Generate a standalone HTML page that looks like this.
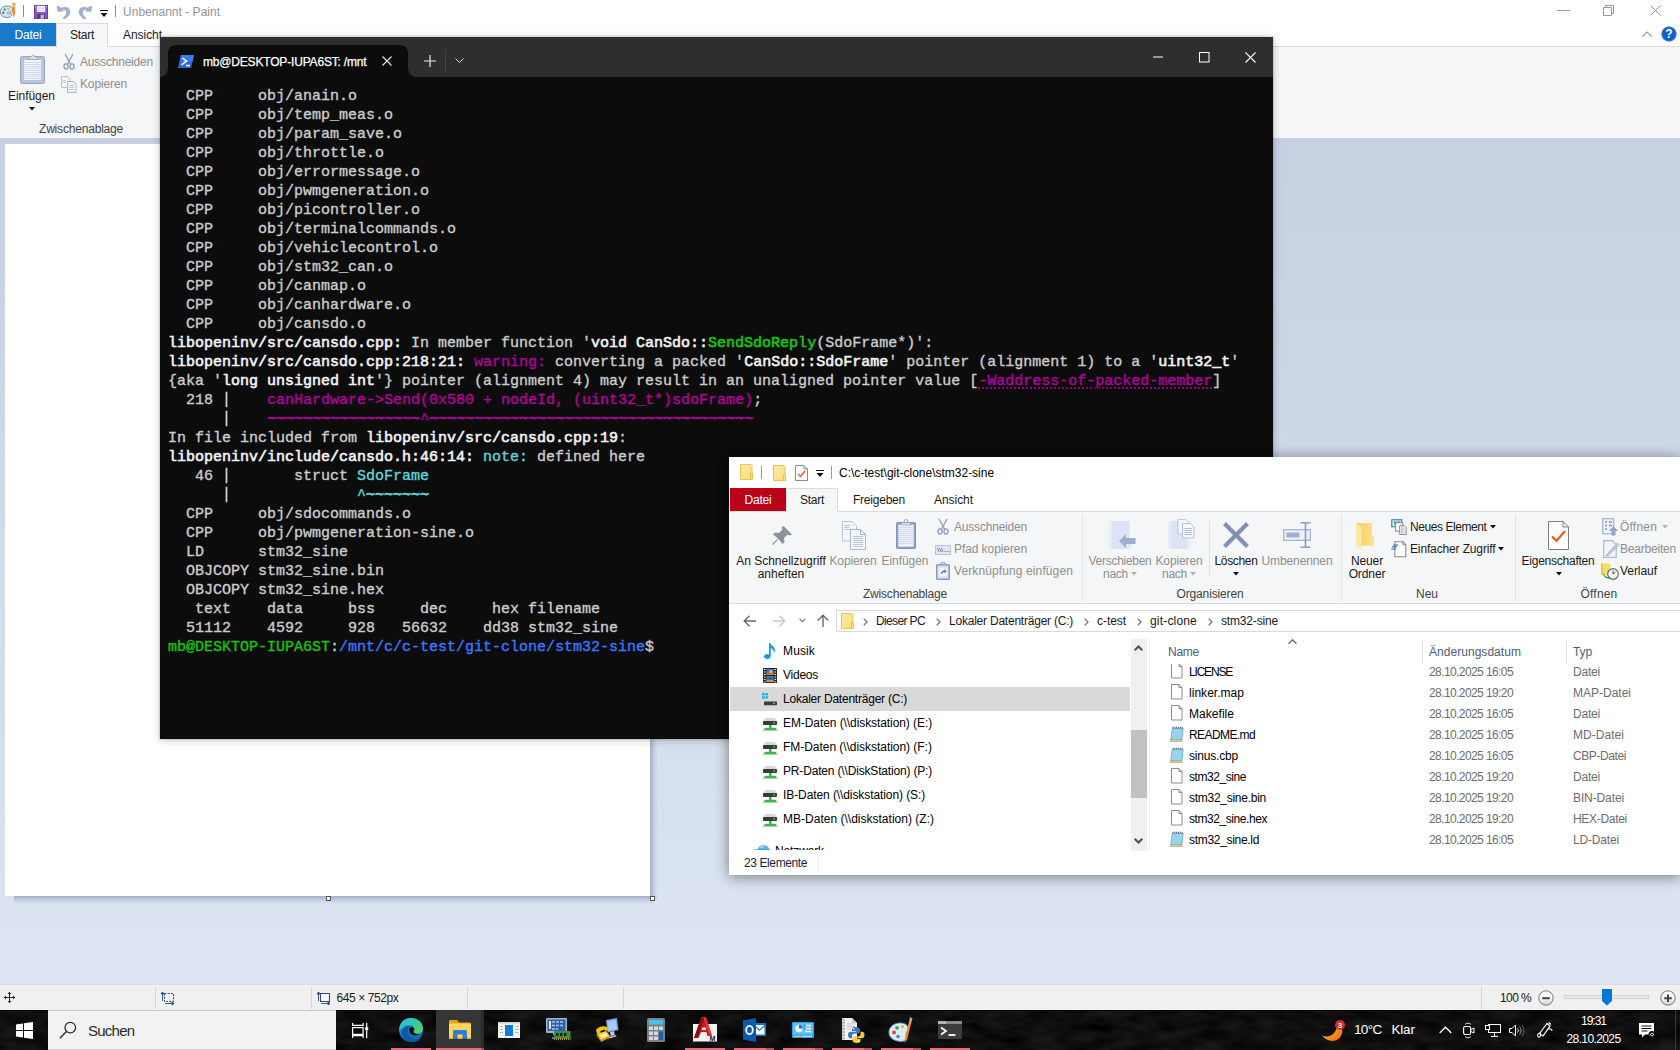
<!DOCTYPE html>
<html lang="de"><head>
<meta charset="utf-8">
<title>Desktop</title>
<style>
*{box-sizing:border-box;margin:0;padding:0}
html,body{width:1680px;height:1050px;overflow:hidden;background:#fff}
body{position:relative;font-family:"Liberation Sans",sans-serif;font-size:12px;color:#1a1a1a}
.abs{position:absolute}
.t{position:absolute;white-space:nowrap;line-height:14px}
svg{position:absolute;overflow:visible}

/* ---------- PAINT ---------- */
#paint{position:absolute;left:0;top:0;width:1680px;height:1010px;background:#fff}
#p-rib{position:absolute;left:0;top:47px;width:1680px;height:91px;background:#f5f6f7}
#p-tabline{position:absolute;left:0;top:46px;width:1680px;height:1px;background:#dadbdc}
#p-datei{position:absolute;left:0;top:23px;width:56px;height:23px;background:#1979ca;color:#fff;text-align:center;line-height:24px}
#p-start{position:absolute;left:56px;top:23px;width:52px;height:24px;background:#f5f6f7;border:1px solid #dadbdc;border-bottom:none;text-align:center;line-height:23px}
#p-work{position:absolute;left:0;top:138px;width:1680px;height:846px;background:linear-gradient(#c6d0e1,#dce5f1)}
#p-canvas{position:absolute;left:5px;top:6px;width:645px;height:752px;background:#fff;}
#p-status{position:absolute;left:0;top:984px;width:1680px;height:26px;background:#f0f0f0;border-top:1px solid #dcdcdc}
.hnd{position:absolute;width:5px;height:5px;background:#fff;border:1px solid #555}
.psep{position:absolute;top:2px;width:1px;height:22px;background:#d7d7d7}

/* ---------- TERMINAL ---------- */
#term{position:absolute;left:160px;top:37px;width:1113px;height:702px;background:#0c0c0c;box-shadow:0 1px 8px rgba(0,0,0,.26),0 0 1px rgba(0,0,0,.5)}
#t-bar{position:absolute;left:0;top:0;width:1113px;height:40px;background:#2e2e2e}
#t-tab{position:absolute;left:8px;top:8px;width:240px;height:32px;background:#0c0c0c;border-radius:8px 8px 0 0}
#t-tab:before,#t-tab:after{content:"";position:absolute;bottom:0;width:8px;height:8px}
#t-tab:before{left:-8px;background:radial-gradient(circle at 0 0,transparent 7.5px,#0c0c0c 8px)}
#t-tab:after{right:-8px;background:radial-gradient(circle at 100% 0,transparent 7.5px,#0c0c0c 8px)}
#t-pre{position:absolute;left:8px;top:50px;font-family:"Liberation Mono",monospace;font-size:15px;line-height:19px;color:#cccccc;white-space:pre}
#t-pre{-webkit-text-stroke:.35px currentColor}
#t-pre b{color:#f2f2f2;font-weight:normal;-webkit-text-stroke:.6px currentColor}
#t-pre i{font-style:normal;display:inline-block;transform:scaleY(1.13);transform-origin:50% 60%}
#t-pre u{text-decoration:none;-webkit-text-stroke:.8px currentColor}
.mg{color:#b4009e}.gr{color:#16c60c}.cy{color:#3a96dd}.cn{color:#61d6d6}.bl{color:#3b78ff}

/* ---------- EXPLORER ---------- */
#exp{position:absolute;left:729px;top:457px;width:951px;height:418px;background:#fff;box-shadow:0 0 12px rgba(0,0,0,.3),0 4px 14px rgba(0,0,0,.2)}
#e-rib{position:absolute;left:0;top:54px;width:951px;height:93px;background:#f5f6f7;border-top:1px solid #dadbdc;border-bottom:1px solid #dadbdc}
#e-datei{position:absolute;left:1px;top:31px;width:56px;height:23px;background:#bd001a;color:#fff;text-align:center;line-height:24px}
#e-start{position:absolute;left:57px;top:31px;width:52px;height:24px;background:#f5f6f7;border:1px solid #dadbdc;border-bottom:none;text-align:center;line-height:23px}
.dis{color:#8f8f8f}
.gsep{position:absolute;top:2px;width:1px;height:87px;background:#e2e3e4}
.glab{position:absolute;top:75px;color:#444;white-space:nowrap;line-height:14px;transform:translateX(-50%)}
.c{transform:translateX(-50%);text-align:center}
#e-addr{position:absolute;left:107px;top:153px;width:860px;height:22px;border:1px solid #d9d9d9;background:#fff}
#e-nav{position:absolute;left:1px;top:182px;width:400px;height:211px;overflow:hidden}
.ni{position:absolute;left:0;width:400px;height:24px;line-height:24px;padding-left:53px;white-space:nowrap;color:#000}
.ni.sel{background:#d9d9d9}
#e-sb{position:absolute;left:402px;top:182px;width:16px;height:212px;background:#f0f0f0}
#e-sb .th{position:absolute;left:0;top:91px;width:16px;height:68px;background:#c1c1c1}
#e-list{position:absolute;left:420px;top:182px;width:531px;height:214px;overflow:hidden}
.hd{position:absolute;top:6px;color:#4c607a;line-height:14px;white-space:nowrap}
.hsep{position:absolute;top:1px;width:1px;height:23px;background:#e5e5e5}
.row{position:absolute;left:0;width:531px;height:21px;line-height:21px;white-space:nowrap}
.row .n{position:absolute;left:40px;color:#000}
.row .d{position:absolute;left:280px;color:#6d6d6d}
.row .ty{position:absolute;left:424px;color:#6d6d6d}
#e-stat{position:absolute;left:0;top:396px;width:951px;height:22px;background:#fff}

/* ---------- TASKBAR ---------- */
#tb{position:absolute;left:0;top:1010px;width:1680px;height:40px;background:#0b0b0b}
#tb-search{position:absolute;left:48px;top:0;width:288px;height:40px;background:#f2f2f2;border-top:1px solid #c4c4c4;border-bottom:1px solid #cfcfcf}
.run{position:absolute;top:38px;height:2px;background:#ea6b7e}
.run i{position:absolute;right:0;top:0;width:8px;height:2px;background:#b9505f}
</style>
</head>
<body>

<svg width="0" height="0" style="position:absolute"><defs>
<linearGradient id="fg1" x1="0" y1="0" x2="1" y2="1"><stop offset="0" stop-color="#ffeaa6"></stop><stop offset="1" stop-color="#fddb78"></stop></linearGradient>
<g id="file"><path d="M2.500 .500h7.500l3 3v11.500H2.500z" fill="#fff" stroke="#8c8c8c"></path><path d="M10 .500v3h3" fill="none" stroke="#8c8c8c"></path></g>
<g id="note"><path d="M3.200 2.500h11L12.800 14H1.800z" fill="#a5dcf2" stroke="#5e9dbb" stroke-width=".8"></path><path d="M4.200 4h9M4 6h9M3.800 8h9M3.500 10h9M3.300 12h9" stroke="#7cc3e2" stroke-width=".7"></path><path d="M1.600 14h11.200l.4 1.500H1.300z" fill="#ead9a4" stroke="#b39b5e" stroke-width=".6"></path><path d="M3.500 1.500h10.500" stroke="#5a5a5a" stroke-dasharray="1 .8" stroke-width="1.600"></path></g>
<g id="mus"><path d="M6.200 0c.8 2.500 5 3.500 4.800 7.500-.1 1.200-.6 2-1.200 2.500.5-2.500-1-4-3-4.800V13c0 1.800-1.500 3-3.400 3C1.500 16 0 14.900 0 13.500S1.600 11 3.400 11c.6 0 1.100 .1 1.600 .4V0z" fill="#1b9bf0"></path></g>
<g id="vid"><rect x="0" y="0" width="14" height="15" fill="#2b2b2b"></rect><path d="M1 1.500h1.500M1 4h1.500M1 6.500h1.500M1 9h1.500M1 11.500h1.500M1 14h1.500M11.500 1.500H13M11.500 4H13M11.500 6.500H13M11.500 9H13M11.500 11.500H13M11.500 14H13" stroke="#f2f2f2" stroke-width="1.200"></path><rect x="3.500" y="1" width="7" height="6" fill="#3b74d9"></rect><rect x="3.500" y="8" width="7" height="6" fill="#3b74d9"></rect><rect x="3.500" y="4.500" width="7" height="2.500" fill="#c7773a"></rect><rect x="3.500" y="12" width="7" height="2" fill="#c7a03a"></rect><circle cx="8" cy="3.500" r="1.600" fill="#e6c23a"></circle><circle cx="7.500" cy="10.500" r="1.300" fill="#5a4a2a"></circle></g>
<g id="hdd"><path d="M0 0h2.700v2.500H0zM3.400 0h2.700v2.500H3.400zM0 3.200h2.700v2.500H0zM3.400 3.200h2.700v2.500H3.400z" fill="#1fb0f2"></path><path d="M4 5.500h9l2 3H2z" fill="#d4d6d8"></path><rect x="2" y="8.500" width="13" height="3.800" rx=".8" fill="#3a3a3a"></rect><rect x="11" y="9.700" width="1.800" height="1.300" fill="#59e04a"></rect></g>
<g id="net"><path d="M2.500 0h9L14 3H0z" fill="#d9dadc"></path><rect x="0" y="3" width="14" height="4" rx=".8" fill="#3a3a3a"></rect><rect x="10" y="4.200" width="1.800" height="1.300" fill="#59e04a"></rect><path d="M6 7h2.500v3H6z" fill="#3db54a"></path><rect x="1.500" y="9.800" width="11.500" height="2.700" fill="#3db54a"></rect><path d="M0 10.500h1.500v2.500H0zM13 10.500h1.500v2.500H13z" fill="#c8c8c8"></path></g>

<g id="fold"><path d="M.500 .500h10.500l1 1V15.500H.500z" fill="url(#fg1)" stroke="#e9c452" stroke-width="1"></path><path d="M10.500 9.500h2V15.500h-2z" fill="#ffe48a" stroke="#e4b93c" stroke-width=".8"></path></g>
<g id="tri"><path d="M0 0h6L3 3.500z"></path></g>
<g id="netw"><path d="M3.500 8A6 6 0 0 1 15.500 8z" fill="#5fb0e6"></path><path d="M6 5c1-1.500 3-2.500 5-2-1 .5-1.500 1.500-3 1.800S7 5.500 6 5z" fill="#bfe2f8"></path><rect x="0" y="6.500" width="16" height="1.500" fill="#2f8ed6"></rect></g>
</defs></svg>
<!-- ================= PAINT ================= -->
<div id="paint">
  <div class="t" style="left: 123px; top: 5px; color: rgb(149, 149, 149); letter-spacing: 0.02px;">Unbenannt - Paint</div>

  <!-- paint app icon -->
  <svg style="left:0;top:2px" width="17" height="17" viewBox="0 0 17 17">
    <path d="M.300 9.500C.300 6 3.500 4 7.500 4c3 0 5 1.300 5 3.300 0 1.500-1.800 2-1.800 3.300 0 1 1.200 1.600 .6 3-.8 1.800-3.500 2.400-6 1.800C2 14.700 .300 12.500 .300 9.500z" fill="#d6e7f5" stroke="#4f8fc6" stroke-width="1"></path>
    <circle cx="3.200" cy="10.800" r="1.200" fill="#e24a3b"></circle><circle cx="4.600" cy="7.500" r="1.200" fill="#3fae49"></circle><circle cx="8.300" cy="7" r="1.300" fill="#f5b82e"></circle><circle cx="8.500" cy="11" r="1.100" fill="#fff" stroke="#4f8fc6" stroke-width=".8"></circle>
    <path d="M11.500 1c1-.8 3.500-.8 4.500 0l-1.200 3.500h-2z" fill="#e3b27a"></path><path d="M12.600 4.500h2.200l.5 6-1.500 5.500-1.500-5.500z" fill="#f58a1f"></path>
  </svg>
  <div class="abs" style="left:23px;top:5px;width:1px;height:12px;background:#8a8a8a"></div>
  <!-- save -->
  <svg style="left:34px;top:5px" width="14" height="14" viewBox="0 0 14 14">
    <rect x="0" y="0" width="14" height="14" rx=".8" fill="#8558c4"></rect><rect x=".500" y=".500" width="13" height="13" fill="none" stroke="#6a3fa8" stroke-width="1"></rect><rect x="2.800" y=".800" width="8.400" height="6.200" fill="#f4f1fa"></rect><path d="M3.500 3h7M3.500 5h7" stroke="#cfc6e4" stroke-width=".8"></path><rect x="3" y="9" width="8" height="5" fill="#5a3a8e"></rect><rect x="6.500" y="9.800" width="3.500" height="4" fill="#b9b9c0"></rect><rect x="1" y="1.200" width="1" height="1.200" fill="#d9c8f2"></rect><rect x="12" y="1.200" width="1" height="1.200" fill="#d9c8f2"></rect>
  </svg>
  <!-- undo / redo -->
  <svg style="left:57px;top:5px" width="14" height="14" viewBox="0 0 14 14"><path d="M0 1l1 5.500 5.500-.5-2-1.500c2.500-.8 5 .5 5 3 0 2-1.200 3.500-3.500 5.500l1.500 1C11.500 11.500 13 9.500 13 7c0-4-4-6-8.500-4z" fill="#a3b1cb" stroke="#8b9bb9" stroke-width=".5"></path></svg>
  <svg style="left:78px;top:5px" width="14" height="14" viewBox="0 0 14 14"><path transform="translate(14,0) scale(-1,1)" d="M0 1l1 5.500 5.500-.5-2-1.500c2.500-.8 5 .5 5 3 0 2-1.200 3.500-3.500 5.500l1.500 1C11.500 11.500 13 9.500 13 7c0-4-4-6-8.500-4z" fill="#a3b1cb" stroke="#8b9bb9" stroke-width=".5"></path></svg>
  <svg style="left:100px;top:10px" width="8" height="8" viewBox="0 0 8 8"><path d="M0 .5h8" stroke="#111" stroke-width="1"></path><path d="M.5 3h7L4 7z" fill="#111"></path></svg>
  <div class="abs" style="left:115px;top:5px;width:1px;height:12px;background:#8a8a8a"></div>
  <!-- window controls -->
  <svg style="left:1557px;top:10px" width="14" height="2"><path d="M0 .5h13" stroke="#999" stroke-width="1"></path></svg>
  <svg style="left:1603px;top:5px" width="11" height="11" viewBox="0 0 11 11"><path d="M.5 2.500h8v8h-8z" fill="none" stroke="#999"></path><path d="M2.500 2.500v-2h8v8h-2" fill="none" stroke="#999"></path></svg>
  <svg style="left:1650px;top:5px" width="11" height="11" viewBox="0 0 11 11"><path d="M.5 .5l10 10M10.500 .5l-10 10" stroke="#999" stroke-width="1"></path></svg>
  <svg style="left:1642px;top:31px" width="10" height="6" viewBox="0 0 10 6"><path d="M.5 5.500l4.500-4.500 4.500 4.500" fill="none" stroke="#999" stroke-width="1.100"></path></svg>
  <svg style="left:1661px;top:26px" width="16" height="16" viewBox="0 0 16 16"><circle cx="8" cy="8" r="7.600" fill="#0f5fc7"></circle><circle cx="8" cy="8" r="7" fill="none" stroke="#4a90e2" stroke-width=".6"></circle><text x="8" y="12.300" text-anchor="middle" font-family="Liberation Sans" font-weight="bold" font-size="12" fill="#fff">?</text></svg>
  <div id="p-tabline"></div>
  <div id="p-datei" style="letter-spacing: -0.2px;">Datei</div>
  <div id="p-start" style="letter-spacing: -0.27px;">Start</div>
  <div class="t" style="left: 123px; top: 28px; letter-spacing: -0.05px;">Ansicht</div>
  <div id="p-rib">

    <!-- clipboard big -->
    <svg style="left:20px;top:6px" width="25" height="31" viewBox="0 0 25 31">
      <rect x=".5" y="3.500" width="24" height="27" rx="2" fill="#b9c4dc" stroke="#95a3c4"></rect>
      <rect x="3.500" y="6.500" width="18" height="21" fill="#f4f7fc" stroke="#a9b6d3" stroke-width=".6"></rect>
      <path d="M4 9.500h17M4 11.500h17M4 13.500h17M4 15.500h17M4 17.500h17M4 19.500h17M4 21.500h17M4 23.500h17M4 25.500h17" stroke="#cdd8ee" stroke-width="1"></path>
      <path d="M8 6.500l1.500-3h2c0-2 3-2 3 0h2l1.500 3z" fill="#d9deea" stroke="#8d9bbc" stroke-width=".7"></path>
    </svg>
    <svg style="left:29px;top:60px" width="6" height="4"><path d="M0 0h6L3 3.500z" fill="#111"></path></svg>
    <!-- scissors -->
    <svg style="left:63px;top:7px" width="12" height="16" viewBox="0 0 12 16">
      <path d="M2 0l5.500 10M10 0L4.500 10" stroke="#97a4c0" stroke-width="1.500" fill="none"></path>
      <ellipse cx="3" cy="12.500" rx="2" ry="2.600" fill="none" stroke="#8f9dbd" stroke-width="1.400"></ellipse><ellipse cx="9" cy="12.500" rx="2" ry="2.600" fill="none" stroke="#8f9dbd" stroke-width="1.400"></ellipse>
    </svg>
    <!-- copy small -->
    <svg style="left:61px;top:29px" width="16" height="17" viewBox="0 0 16 17">
      <path d="M.5 .500h6l2.500 2.500v8.500h-8.500z" fill="#f5f7fb" stroke="#b7c2d9"></path>
      <path d="M6.500 5.500h6l2.500 2.500v8.500h-8.500z" fill="#f5f7fb" stroke="#a7b4d0"></path>
      <path d="M8 9.500h5M8 11.500h5M8 13.500h5M2 4.500h3M2 6.500h3" stroke="#b4c0da" stroke-width=".9"></path>
    </svg>
    <div class="t" style="left: 8px; top: 42px; color: rgb(26, 26, 26); letter-spacing: -0.05px;">Einfügen</div>
    <div class="t" style="left: 80px; top: 8px; color: rgb(143, 143, 143); letter-spacing: -0.2px;">Ausschneiden</div>
    <div class="t" style="left: 80px; top: 30px; color: rgb(143, 143, 143); letter-spacing: -0.13px;">Kopieren</div>
    <div class="t" style="left: 39px; top: 75px; color: rgb(68, 68, 68); letter-spacing: -0.19px;">Zwischenablage</div>
  </div>
  <div id="p-work"><div class="abs" style="left:14px;top:758px;width:636px;height:8px;background:linear-gradient(rgba(160,173,198,.95),rgba(190,201,221,.6) 60%,rgba(210,220,236,0))"></div><div class="abs" style="left:650px;top:15px;width:8px;height:743px;background:linear-gradient(90deg,rgba(160,173,198,.95),rgba(190,201,221,.6) 60%,rgba(210,220,236,0))"></div><div class="abs" style="left:650px;top:758px;width:8px;height:8px;background:linear-gradient(135deg,rgba(160,173,198,.95),rgba(190,201,221,.5) 45%,rgba(210,220,236,0) 75%)"></div><div id="p-canvas"></div><div class="hnd" style="left:650px;top:758px"></div><div class="hnd" style="left:326px;top:758px"></div><div class="hnd" style="left:650px;top:381px"></div></div>
  <div id="p-status">
    <div class="psep" style="left:155px"></div>
    <div class="psep" style="left:311px"></div>
    <div class="psep" style="left:467px"></div>
    <div class="psep" style="left:623px"></div>
    <div class="psep" style="left:1481px"></div>

    <svg style="left:4px;top:7px" width="11" height="11" viewBox="0 0 11 11"><path d="M5.500 0v11M0 5.500h11" stroke="#222" stroke-width="1"></path><path d="M5.500 0l-2 2h4zM5.500 11l-2-2h4zM0 5.500l2-2v4zM11 5.500l-2-2v4z" fill="#222"></path></svg>
    <svg style="left:161px;top:7px" width="14" height="13" viewBox="0 0 14 13"><rect x="3.500" y="1.500" width="9" height="8" fill="none" stroke="#2a4a7a" stroke-dasharray="2 1.200"></rect><path d="M1.500 0v9M1.500 0l-1.500 2h3zM4 11.500h9M13 11.500l-2-1.500v3z" stroke="#2a4a7a" stroke-width=".9" fill="#2a4a7a"></path></svg>
    <svg style="left:317px;top:7px" width="14" height="13" viewBox="0 0 14 13"><rect x="3.500" y="1.500" width="9" height="8" fill="#fff" stroke="#2a4a7a"></rect><path d="M1.500 0v9M1.500 0l-1.500 2h3zM4 11.500h9M13 11.500l-2-1.500v3z" stroke="#2a4a7a" stroke-width=".9" fill="#2a4a7a"></path></svg>
    <svg style="left:1538px;top:5px" width="16" height="16" viewBox="0 0 16 16"><defs><linearGradient id="zb" x1="0" y1="0" x2="0" y2="1"><stop offset="0" stop-color="#fff"></stop><stop offset=".55" stop-color="#f3f3f3"></stop><stop offset="1" stop-color="#cfcfcf"></stop></linearGradient></defs><circle cx="8" cy="8" r="7.200" fill="url(#zb)" stroke="#777" stroke-width="1"></circle><path d="M4.200 8.200h7.600" stroke="#444" stroke-width="2"></path></svg>
    <div class="abs" style="left:1564px;top:10px;width:85px;height:4px;background:#e7eaea;border:1px solid #d2d2d2"></div>
    <svg style="left:1602px;top:4px" width="10" height="17" viewBox="0 0 10 17"><path d="M0 0h10v12l-5 4.500L0 12z" fill="#0078d7"></path></svg>
    <svg style="left:1660px;top:5px" width="16" height="16" viewBox="0 0 16 16"><circle cx="8" cy="8" r="7.200" fill="url(#zb)" stroke="#777" stroke-width="1"></circle><path d="M4.200 8.200h7.600M8 4.400v7.600" stroke="#444" stroke-width="2"></path></svg>
    <div class="t" style="left: 336.5px; top: 6px; letter-spacing: -0.42px;">645 × 752px</div>
    <div class="t" style="left: 1500px; top: 6px; letter-spacing: -0.61px;">100 %</div>
  </div>
</div>

<!-- ================= TERMINAL ================= -->
<div id="term">
  <div id="t-bar">

    <svg style="left:264px;top:18px" width="12" height="12" viewBox="0 0 12 12"><path d="M6 0v12M0 6h12" stroke="#e8e8e8" stroke-width="1.200"></path></svg>
    <div class="abs" style="left:285px;top:12px;width:1px;height:23px;background:#444"></div>
    <svg style="left:295px;top:21px" width="9" height="5" viewBox="0 0 9 5"><path d="M.500 .500l4 4 4-4" fill="none" stroke="#ddd" stroke-width="1"></path></svg>
    <svg style="left:993px;top:19px" width="11" height="2"><path d="M0 1h10" stroke="#fff" stroke-width="1"></path></svg>
    <svg style="left:1039px;top:15px" width="11" height="11" viewBox="0 0 11 11"><rect x=".5" y=".5" width="9.500" height="9.500" fill="none" stroke="#fff" stroke-width="1"></rect></svg>
    <svg style="left:1085px;top:15px" width="11" height="11" viewBox="0 0 11 11"><path d="M.500 .500l10 10M10.500 .500l-10 10" stroke="#fff" stroke-width="1.100"></path></svg>
    <div id="t-tab">

      <svg style="left:10px;top:10px" width="16" height="13" viewBox="0 0 16 13"><path d="M3 0h13l-3 13H0z" fill="#2f6bd6"></path><path d="M3 0h13l-1.500 6.500H1.500z" fill="#3f7ce6"></path><path d="M4.500 3l4 3.200-5 3.600" fill="none" stroke="#fff" stroke-width="1.500"></path><path d="M8 10.500h4" stroke="#fff" stroke-width="1.500"></path></svg>
      <svg style="left:214px;top:11px" width="10" height="10" viewBox="0 0 10 10"><path d="M.500 .500l9 9M9.500 .500l-9 9" stroke="#e8e8e8" stroke-width="1.100"></path></svg>
      <div class="t" style="left: 35px; top: 10px; color: rgb(255, 255, 255); font-size: 12px; -webkit-text-stroke: 0.25px rgb(255, 255, 255); letter-spacing: -0.18px;">mb@DESKTOP-IUPA6ST: /mnt</div>
    </div>
  </div>
<pre id="t-pre">  CPP     obj/anain.o
  CPP     obj/temp_meas.o
  CPP     obj/param_save.o
  CPP     obj/throttle.o
  CPP     obj/errormessage.o
  CPP     obj/pwmgeneration.o
  CPP     obj/picontroller.o
  CPP     obj/terminalcommands.o
  CPP     obj/vehiclecontrol.o
  CPP     obj/stm32_can.o
  CPP     obj/canmap.o
  CPP     obj/canhardware.o
  CPP     obj/cansdo.o
<b>libopeninv/src/cansdo.cpp:</b> In member function '<b>void CanSdo::<span class="gr">SendSdoReply</span></b>(SdoFrame*)':
<b>libopeninv/src/cansdo.cpp:218:21:</b> <span class="mg">warning:</span> converting a packed '<b>CanSdo::SdoFrame</b>' pointer (alignment 1) to a '<b>uint32_t</b>'
{aka '<b>long unsigned int</b>'} pointer (alignment 4) may result in an unaligned pointer value [<span class="mg" style="text-decoration:underline dotted;text-underline-offset:3px">-Waddress-of-packed-member</span>]
  218 <i>|</i>    <span class="mg">canHardware-&gt;Send(0x580 + nodeId, (uint32_t*)sdoFrame)</span>;
      <i>|</i>    <span class="mg"><u>~~~~~~~~~~~~~~~~~</u>^<u>~~~~~~~~~~~~~~~~~~~~~~~~~~~~~~~~~~~~</u></span>
In file included from <b>libopeninv/src/cansdo.cpp:19</b>:
<b>libopeninv/include/cansdo.h:46:14:</b> <span class="cn">note:</span> defined here
   46 <i>|</i>       struct <span class="cn">SdoFrame</span>
      <i>|</i>              <span class="cn">^<u>~~~~~~~</u></span>
  CPP     obj/sdocommands.o
  CPP     obj/pwmgeneration-sine.o
  LD      stm32_sine
  OBJCOPY stm32_sine.bin
  OBJCOPY stm32_sine.hex
   text    data     bss     dec     hex filename
  51112    4592     928   56632    dd38 stm32_sine
<span class="gr">mb@DESKTOP-IUPA6ST</span>:<span class="bl">/mnt/c/c-test/git-clone/stm32-sine</span>$</pre>
</div>

<!-- ================= EXPLORER ================= -->
<div id="exp">

  <svg style="left:11px;top:7px" width="13" height="16"><use href="#fold"></use></svg>
  <div class="abs" style="left:32px;top:9px;width:1px;height:13px;background:#9a9a9a"></div>
  <svg style="left:44px;top:8px" width="13" height="16"><use href="#fold"></use></svg>
  <svg style="left:66px;top:8px" width="13" height="16" viewBox="0 0 13 16"><path d="M.500 .500h8.500l3.500 3.500v11.500h-12z" fill="#fff" stroke="#8a8a8a"></path><path d="M9 .500v3.500h3.500" fill="none" stroke="#8a8a8a"></path><path d="M3 9l2.500 2.500L10 6" fill="none" stroke="#f0561d" stroke-width="1.500"></path></svg>
  <svg style="left:87px;top:13px" width="8" height="8" viewBox="0 0 8 8"><path d="M0 .500h8" stroke="#111"></path><path d="M.500 3h7L4 7z" fill="#111"></path></svg>
  <div class="abs" style="left:102px;top:9px;width:1px;height:13px;background:#9a9a9a"></div>
  <div class="t" style="left: 110px; top: 9px; color: rgb(0, 0, 0); letter-spacing: -0.01px;">C:\c-test\git-clone\stm32-sine</div>
  <div id="e-rib">

    <!-- pin -->
    <svg style="left:43px;top:13px" width="21" height="21" viewBox="0 0 21 21"><path d="M11.500 1l8.500 8.500-2.500 1-2-1-3.500 3.500.5 4-2 2-4-5L1 20l-1-1 6-5.500-5-4 2-2 4 .5L10.500 4.500l-1-2z" fill="#8c939b"></path></svg>
    <!-- copy big -->
    <svg style="left:113px;top:9px" width="25" height="29" viewBox="0 0 25 29"><path d="M.500 .500h10l4 4v15.500h-14z" fill="#f3f6fc" stroke="#b9c5de"></path><path d="M8.500 8.500h10l5 5v15h-15z" fill="#f6f8fd" stroke="#a9b7d6"></path><path d="M18.500 8.500v5h5" fill="none" stroke="#a9b7d6"></path><path d="M11 15.500h10M11 17.500h10M11 19.500h10M11 21.500h10M11 23.500h10M11 25.500h10M2.500 4.500h6M2.500 6.500h5M2.500 8.500h5" stroke="#b3c0dc" stroke-width=".9"></path></svg>
    <!-- paste big -->
    <svg style="left:167px;top:7px" width="20" height="30" viewBox="0 0 20 30"><rect x=".800" y="3.800" width="18.400" height="25.400" rx="1" fill="#aab6d0" stroke="#8494b6" stroke-width="1.600"></rect><rect x="2.500" y="6" width="15" height="21.500" fill="#eef2fa"></rect><path d="M2.500 8.500h15M2.500 10.500h15M2.500 12.500h15M2.500 14.500h15M2.500 16.500h15M2.500 18.500h15M2.500 20.500h15M2.500 22.500h15M2.500 24.500h15" stroke="#d3dbec"></path><path d="M4.500 6l2-2.500h7l2 2.500z" fill="#dfe4ee" stroke="#8d9bbb" stroke-width=".7"></path><rect x="8.300" y=".700" width="3.400" height="3" rx="1" fill="none" stroke="#8d9bbb" stroke-width="1"></rect></svg>
    <!-- scissors -->
    <svg style="left:208px;top:7px" width="12" height="16" viewBox="0 0 12 16"><path d="M2 0l5.500 10M10 0L4.500 10" stroke="#97a4c0" stroke-width="1.500" fill="none"></path><ellipse cx="3" cy="12.500" rx="2" ry="2.600" fill="none" stroke="#8f9dbd" stroke-width="1.400"></ellipse><ellipse cx="9" cy="12.500" rx="2" ry="2.600" fill="none" stroke="#8f9dbd" stroke-width="1.400"></ellipse></svg>
    <!-- path copy -->
    <svg style="left:206px;top:33px" width="16" height="10" viewBox="0 0 16 10"><rect x=".500" y=".500" width="15" height="9" fill="#dfe6f4" stroke="#b7c3dd"></rect><path d="M2.500 3l1.500 4M4.500 3l1.500 4M6.500 3l1.500 4" stroke="#6f80a8" stroke-width=".9"></path><path d="M9.500 6.500h1M11.500 6.500h1M13.500 6.500h1" stroke="#6f80a8" stroke-width="1"></path></svg>
    <!-- shortcut paste -->
    <svg style="left:207px;top:50px" width="14" height="18" viewBox="0 0 14 18"><rect x=".700" y="2.700" width="12.600" height="14.600" rx="1" fill="#dbe3f3" stroke="#8796bb" stroke-width="1.400"></rect><path d="M4 2.700l1-2h4l1 2z" fill="#dce1ec" stroke="#8796bb" stroke-width=".8"></path><rect x="3.500" y="6" width="7" height="8" fill="#f6f8fd"></rect><path d="M5 12c0-2.500 1.500-3.500 3.500-3.500V7l2 2.200-2 2.300V10c-1.200 0-2 .5-2.300 2z" fill="#5b73a8"></path></svg>
    <!-- move to -->
    <svg style="left:380px;top:9px" width="27" height="29" viewBox="0 0 27 29"><path d="M0 0h20.500v28H0z" fill="#dbe3f4"></path><path d="M0 0h3v28H0z" fill="#e6ecf8"></path><path d="M20 14v14h3V17z" fill="#e9eef9"></path><path d="M10 20l7-7v4h9.500v6H17v4z" fill="#9caed2"></path></svg>
    <!-- copy to -->
    <svg style="left:439px;top:7px" width="27" height="31" viewBox="0 0 27 31"><path d="M0 2h19v28H0z" fill="#dbe3f4"></path><path d="M0 2h3v28H0z" fill="#e6ecf8"></path><path d="M19 18v12h4V20z" fill="#e9eef9"></path><path d="M10 .500h8l3 3v11.500h-11z" fill="#f6f8fd" stroke="#b0bdd9" stroke-width=".8"></path><path d="M14.500 4.500h8l3.500 3.500v11h-11.500z" fill="#f6f8fd" stroke="#a3b1d0" stroke-width=".8"></path><path d="M16.500 9.500h7.500M16.500 11.500h7.500M16.500 13.500h7.500M16.500 15.500h7.500" stroke="#aab8d6" stroke-width=".9"></path></svg>
    <div class="abs" style="left:480px;top:9px;width:1px;height:55px;background:#e2e3e4"></div>
    <!-- delete X -->
    <svg style="left:494px;top:10px" width="26" height="26" viewBox="0 0 26 26"><path d="M3 0L13 10 23 0 26 3 16 13 26 23 23 26 13 16 3 26 0 23 10 13 0 3z" fill="#8392b4"></path></svg>
    <svg style="left:504px;top:60px" width="6" height="4"><use href="#tri" fill="#111"></use></svg>
    <!-- rename -->
    <svg style="left:554px;top:10px" width="28" height="26" viewBox="0 0 28 26"><rect x=".700" y="7.700" width="26.600" height="10.600" fill="#eef2fb" stroke="#a9b7d8" stroke-width="1.400"></rect><rect x="3.500" y="10.500" width="13" height="5" fill="#9fb0d4"></rect><path d="M17.500 .800h3.500c1 0 1.500 .7 1.500 1.500v21.400c0 .8-.5 1.500-1.500 1.500h-3.500M27.500 .800H24c-1 0-1.500 .7-1.500 1.500M27.500 25.200H24c-1 0-1.500-.7-1.500-1.500" fill="none" stroke="#8d9cc0" stroke-width="1.600"></path></svg>
    <!-- verschieben/kopieren dropdown arrows -->
    <svg style="left:402px;top:60px" width="6" height="4"><use href="#tri" fill="#b0b0b0"></use></svg>
    <svg style="left:461px;top:60px" width="6" height="4"><use href="#tri" fill="#b0b0b0"></use></svg>
    <!-- new folder -->
    <svg style="left:626px;top:10px" width="20" height="29" viewBox="0 0 20 29"><defs><linearGradient id="nf1" x1="0" y1="0" x2="1" y2="0"><stop offset="0" stop-color="#f3cd63"></stop><stop offset="1" stop-color="#ffe08c"></stop></linearGradient></defs><path d="M1.200 1H16.900V14.300L19 15.500V23.800H1.200z" fill="url(#nf1)"></path><path d="M1.200 1L6.700 5.700 6 27.600 1.200 24z" fill="#ffe9a6"></path></svg>
    <!-- new element -->
    <svg style="left:662px;top:7px" width="17" height="17" viewBox="0 0 17 17"><rect x=".700" y=".700" width="10" height="7" fill="#cfe6f7" stroke="#3f8fc4" stroke-width="1.200"></rect><rect x="3" y="2.500" width="2" height="3" fill="#4a9a4a"></rect><rect x="6" y="2.500" width="3" height="1.500" fill="#2f6fae"></rect><rect x="4.700" y="3.700" width="7" height="8.500" fill="#fff" stroke="#8c8c8c" stroke-width="1"></rect><path d="M8.700 6.600h4.500l2 2v6.800H8.700z" fill="#fff" stroke="#8c8c8c" stroke-width="1"></path><path d="M10 9h4.500M10 11h4.500M10 13h4.500" stroke="#9cc3ea" stroke-width=".9"></path><path d="M11 7v8" stroke="#ef9a9a" stroke-width=".8"></path></svg>
    <!-- easy access -->
    <svg style="left:662px;top:29px" width="16" height="17" viewBox="0 0 16 17"><path d="M3.800 .800h8l3 3v12H3.800z" fill="#fff" stroke="#8c8c8c" stroke-width="1.100"></path><path d="M11.800 .800v3h3" fill="none" stroke="#8c8c8c" stroke-width="1"></path><path d="M2.500 4h4.500M1 5.800h5M.300 8h4.500" stroke="#1c62b0" stroke-width="1.100"></path></svg>
    <svg style="left:761px;top:13px" width="6" height="4"><use href="#tri" fill="#111"></use></svg>
    <svg style="left:769px;top:35px" width="6" height="4"><use href="#tri" fill="#111"></use></svg>
    <!-- properties -->
    <svg style="left:819px;top:9px" width="21" height="29" viewBox="0 0 21 29"><path d="M.500 .500h14.500l5.500 5.500v22.500H.500z" fill="#fff" stroke="#7d7d7d"></path><path d="M15 .500v5.500h5.500" fill="none" stroke="#7d7d7d"></path><path d="M4 15.500l4.500 4.500L17 10" fill="none" stroke="#f0561d" stroke-width="2.200"></path></svg>
    <svg style="left:827px;top:60px" width="6" height="4"><use href="#tri" fill="#111"></use></svg>
    <!-- open -->
    <svg style="left:873px;top:6px" width="16" height="18" viewBox="0 0 16 18"><rect x=".700" y=".700" width="11" height="15" fill="#eef2fb" stroke="#a3b2d3" stroke-width="1.200"></rect><path d="M3 4h2M3 7.500h2M3 11h2M7 4h3M7 7.500h3" stroke="#7f93bf" stroke-width="1.600"></path><path d="M11.500 8l4.500 5h-2.500v4.500h-4V13H7z" fill="#93a5cb"></path></svg>
    <svg style="left:933px;top:13px" width="6" height="4"><use href="#tri" fill="#b0b0b0"></use></svg>
    <!-- edit -->
    <svg style="left:874px;top:28px" width="16" height="18" viewBox="0 0 16 18"><path d="M.700 .700h8.500l4 4v12.600H.700z" fill="#f2f5fc" stroke="#a9b7d8" stroke-width="1.200"></path><path d="M14.500 3L16 4.500 6 15l-2.500 1 1-2.500z" fill="#c4cfe8" stroke="#93a5cb" stroke-width=".8"></path></svg>
    <!-- history -->
    <svg style="left:872px;top:50px" width="18" height="18" viewBox="0 0 18 18"><path d="M0 1.500h9.500V13H0z" fill="#f8dc6a"></path><path d="M0 1.500h2v11.500H0z" fill="#ecc84a"></path><circle cx="12" cy="12" r="5.300" fill="#f4f4f4" stroke="#6b6b6b" stroke-width="1.200"></circle><path d="M12 8.500V12l2.500-2" fill="none" stroke="#555" stroke-width="1"></path><path d="M2.500 11.500c1.500 3 4 4 6.500 3.500l-.5 2-4-1.200L2 13z" fill="#2c9e3f"></path></svg>
    <div class="t c" style="left: 52px; top: 43px; line-height: 13px; letter-spacing: -0.02px;">An Schnellzugriff<br>anheften</div>
    <div class="t c dis" style="left: 124px; top: 43px; line-height: 13px; letter-spacing: -0.13px;">Kopieren</div>
    <div class="t c dis" style="left: 176px; top: 43px; line-height: 13px; letter-spacing: -0.05px;">Einfügen</div>
    <div class="t dis" style="left: 225px; top: 8px; letter-spacing: -0.2px;">Ausschneiden</div>
    <div class="t dis" style="left: 225px; top: 30px; letter-spacing: -0.08px;">Pfad kopieren</div>
    <div class="t dis" style="left: 225px; top: 52px; letter-spacing: 0.11px;">Verknüpfung einfügen</div>
    <div class="glab" style="left: 176px; letter-spacing: -0.19px;">Zwischenablage</div>
    <div class="gsep" style="left:353px"></div>
    <div class="t c dis" style="left: 391px; top: 43px; line-height: 13px; letter-spacing: -0.28px;">Verschieben</div><div class="t dis" style="left: 374px; top: 56px; line-height: 13px; letter-spacing: -0.26px;">nach</div>
    <div class="t c dis" style="left: 450px; top: 43px; line-height: 13px; letter-spacing: -0.13px;">Kopieren</div><div class="t dis" style="left: 433px; top: 56px; line-height: 13px; letter-spacing: -0.26px;">nach</div>
    <div class="t c" style="left: 507px; top: 43px; line-height: 13px; letter-spacing: -0.34px;">Löschen</div>
    <div class="t c dis" style="left: 568px; top: 43px; line-height: 13px; letter-spacing: -0.11px;">Umbenennen</div>
    <div class="glab" style="left: 481px; letter-spacing: -0.14px;">Organisieren</div>
    <div class="gsep" style="left:612px"></div>
    <div class="t c" style="left: 638px; top: 43px; line-height: 13px; letter-spacing: -0.1px;">Neuer<br>Ordner</div>
    <div class="t" style="left: 681px; top: 8px; letter-spacing: -0.43px;">Neues Element</div>
    <div class="t" style="left: 681px; top: 30px; letter-spacing: -0.14px;">Einfacher Zugriff</div>
    <div class="glab" style="left: 698px; letter-spacing: -0.01px;">Neu</div>
    <div class="gsep" style="left:786px"></div>
    <div class="t c" style="left: 829px; top: 43px; line-height: 13px; letter-spacing: -0.24px;">Eigenschaften</div>
    <div class="t dis" style="left: 891px; top: 8px; letter-spacing: 0.2px;">Öffnen</div>
    <div class="t dis" style="left: 891px; top: 30px; letter-spacing: -0.2px;">Bearbeiten</div>
    <div class="t" style="left: 891px; top: 52px; letter-spacing: -0.05px;">Verlauf</div>
    <div class="glab" style="left: 870px; letter-spacing: 0.2px;">Öffnen</div>
  </div>
  <div id="e-datei" style="letter-spacing: -0.2px;">Datei</div>
  <div id="e-start" style="letter-spacing: -0.27px;">Start</div>
  <div class="t" style="left: 124px; top: 36px; letter-spacing: -0.23px;">Freigeben</div>
  <div class="t" style="left: 205px; top: 36px; letter-spacing: -0.05px;">Ansicht</div>
  <svg style="left:14px;top:158px" width="13" height="12" viewBox="0 0 13 12"><path d="M13 6H1.500M6.500 .700L1.200 6l5.300 5.300" fill="none" stroke="#6a6a6a" stroke-width="1.400"></path></svg>
  <svg style="left:44px;top:158px" width="13" height="12" viewBox="0 0 13 12"><path d="M0 6h11.500M6.500 .700l5.300 5.300-5.300 5.300" fill="none" stroke="#c9c9c9" stroke-width="1.400"></path></svg>
  <svg style="left:70px;top:161px" width="7" height="5" viewBox="0 0 7 5"><path d="M.500 .700l3 3 3-3" fill="none" stroke="#7a7a7a" stroke-width="1.200"></path></svg>
  <svg style="left:88px;top:157px" width="12" height="13" viewBox="0 0 12 13"><path d="M6 13V1.500M.700 6.500L6 1.200l5.300 5.300" fill="none" stroke="#6a6a6a" stroke-width="1.400"></path></svg>
  <div id="e-addr">

    <svg style="left:4px;top:2px" width="13" height="16"><use href="#fold"></use></svg>
    <svg class="chv" style="left:26px;top:7px" width="5" height="8" viewBox="0 0 5 8"><path d="M.700 .700L4 4 .700 7.300" fill="none" stroke="#6a6a6a" stroke-width="1.200"></path></svg>
    <svg class="chv" style="left:99px;top:7px" width="5" height="8" viewBox="0 0 5 8"><path d="M.700 .700L4 4 .700 7.300" fill="none" stroke="#6a6a6a" stroke-width="1.200"></path></svg>
    <svg class="chv" style="left:247px;top:7px" width="5" height="8" viewBox="0 0 5 8"><path d="M.700 .700L4 4 .700 7.300" fill="none" stroke="#6a6a6a" stroke-width="1.200"></path></svg>
    <svg class="chv" style="left:300px;top:7px" width="5" height="8" viewBox="0 0 5 8"><path d="M.700 .700L4 4 .700 7.300" fill="none" stroke="#6a6a6a" stroke-width="1.200"></path></svg>
    <svg class="chv" style="left:371px;top:7px" width="5" height="8" viewBox="0 0 5 8"><path d="M.700 .700L4 4 .700 7.300" fill="none" stroke="#6a6a6a" stroke-width="1.200"></path></svg>
    <div class="t" style="left: 39px; top: 3px; letter-spacing: -0.63px;">Dieser PC</div>
    <div class="t" style="left: 112px; top: 3px; letter-spacing: -0.22px;">Lokaler Datenträger (C:)</div>
    <div class="t" style="left: 260px; top: 3px; letter-spacing: -0.06px;">c-test</div>
    <div class="t" style="left: 313px; top: 3px; letter-spacing: 0.18px;">git-clone</div>
    <div class="t" style="left: 384px; top: 3px; letter-spacing: -0.17px;">stm32-sine</div>
  </div>
  <div id="e-nav">
    <div class="ni" style="top: 0px; letter-spacing: 0.13px;"><svg style="left:34px;top:4px" width="12" height="16"><use href="#mus"></use></svg>Musik</div>
    <div class="ni" style="top: 24px; letter-spacing: -0.25px;"><svg style="left:33px;top:5px" width="14" height="15"><use href="#vid"></use></svg>Videos</div>
    <div class="ni sel" style="top: 48px; letter-spacing: -0.22px;"><svg style="left:32px;top:6px" width="16" height="13"><use href="#hdd"></use></svg>Lokaler Datenträger (C:)</div>
    <div class="ni" style="top: 72px; letter-spacing: -0.08px;"><svg style="left:33px;top:7px" width="15" height="13"><use href="#net"></use></svg>EM-Daten (\\diskstation) (E:)</div>
    <div class="ni" style="top: 96px; letter-spacing: -0.04px;"><svg style="left:33px;top:7px" width="15" height="13"><use href="#net"></use></svg>FM-Daten (\\diskstation) (F:)</div>
    <div class="ni" style="top: 120px; letter-spacing: -0.17px;"><svg style="left:33px;top:7px" width="15" height="13"><use href="#net"></use></svg>PR-Daten (\\DiskStation) (P:)</div>
    <div class="ni" style="top: 144px; letter-spacing: -0.09px;"><svg style="left:33px;top:7px" width="15" height="13"><use href="#net"></use></svg>IB-Daten (\\diskstation) (S:)</div>
    <div class="ni" style="top: 168px; letter-spacing: 0.01px;"><svg style="left:33px;top:7px" width="15" height="13"><use href="#net"></use></svg>MB-Daten (\\diskstation) (Z:)</div>
    <div class="ni" style="top: 200px; padding-left: 45px; letter-spacing: -0.13px;"><svg style="left:24px;top:4px" width="16" height="8"><use href="#netw"></use></svg>Netzwerk</div>
  </div>
  <div id="e-sb"><div class="th"></div><svg style="left:3px;top:6px" width="9" height="6" viewBox="0 0 9 6"><path d="M.700 5.300l3.800-3.800 3.800 3.800" fill="none" stroke="#505050" stroke-width="2"></path></svg><svg style="left:3px;top:199px" width="9" height="6" viewBox="0 0 9 6"><path d="M.700 .700l3.800 3.800 3.800-3.800" fill="none" stroke="#505050" stroke-width="2"></path></svg></div>
  <div class="abs" style="left:420px;top:182px;width:1px;height:212px;background:#f0f0f0"></div>
  <div id="e-list">
    <svg style="left:139px;top:0px" width="9" height="5" viewBox="0 0 9 5"><path d="M.500 4.700l4-4 4 4" fill="none" stroke="#6e6e6e" stroke-width="1.300"></path></svg>
    <div class="hd" style="left: 19px; letter-spacing: -0.25px;">Name</div>
    <div class="hd" style="left: 280px; letter-spacing: 0.04px;">Änderungsdatum</div>
    <div class="hd" style="left: 424px; letter-spacing: -0.11px;">Typ</div>
    <div class="hsep" style="left:273px"></div>
    <div class="hsep" style="left:417px"></div>
    <div class="abs" style="left:0;top:25px;width:531px;height:189px;overflow:hidden">
      <div class="row" style="top:-2px"><svg class="ic-file" style="left:20px;top:1px" width="16" height="16"><use href="#file"></use></svg><span class="n" style="letter-spacing: -1.19px;">LICENSE</span><span class="d" style="letter-spacing: -0.59px;">28.10.2025 16:05</span><span class="ty" style="letter-spacing: -0.2px;">Datei</span></div>
      <div class="row" style="top:19px"><svg class="ic-file" style="left:20px;top:1px" width="16" height="16"><use href="#file"></use></svg><span class="n" style="letter-spacing: 0.03px;">linker.map</span><span class="d" style="letter-spacing: -0.59px;">28.10.2025 19:20</span><span class="ty">MAP-Datei</span></div>
      <div class="row" style="top:40px"><svg class="ic-file" style="left:20px;top:1px" width="16" height="16"><use href="#file"></use></svg><span class="n" style="letter-spacing: 0.04px;">Makefile</span><span class="d" style="letter-spacing: -0.59px;">28.10.2025 16:05</span><span class="ty" style="letter-spacing: -0.2px;">Datei</span></div>
      <div class="row" style="top:61px"><svg class="ic-note" style="left:20px;top:1px" width="16" height="16"><use href="#note"></use></svg><span class="n" style="letter-spacing: -0.59px;">README.md</span><span class="d" style="letter-spacing: -0.59px;">28.10.2025 16:05</span><span class="ty" style="letter-spacing: 0.04px;">MD-Datei</span></div>
      <div class="row" style="top:82px"><svg class="ic-note" style="left:20px;top:1px" width="16" height="16"><use href="#note"></use></svg><span class="n" style="letter-spacing: -0.19px;">sinus.cbp</span><span class="d" style="letter-spacing: -0.59px;">28.10.2025 16:05</span><span class="ty" style="letter-spacing: -0.41px;">CBP-Datei</span></div>
      <div class="row" style="top:103px"><svg class="ic-file" style="left:20px;top:1px" width="16" height="16"><use href="#file"></use></svg><span class="n" style="letter-spacing: -0.44px;">stm32_sine</span><span class="d" style="letter-spacing: -0.59px;">28.10.2025 19:20</span><span class="ty" style="letter-spacing: -0.2px;">Datei</span></div>
      <div class="row" style="top:124px"><svg class="ic-file" style="left:20px;top:1px" width="16" height="16"><use href="#file"></use></svg><span class="n" style="letter-spacing: -0.27px;">stm32_sine.bin</span><span class="d" style="letter-spacing: -0.59px;">28.10.2025 19:20</span><span class="ty" style="letter-spacing: -0.11px;">BIN-Datei</span></div>
      <div class="row" style="top:145px"><svg class="ic-file" style="left:20px;top:1px" width="16" height="16"><use href="#file"></use></svg><span class="n" style="letter-spacing: -0.43px;">stm32_sine.hex</span><span class="d" style="letter-spacing: -0.59px;">28.10.2025 19:20</span><span class="ty" style="letter-spacing: -0.3px;">HEX-Datei</span></div>
      <div class="row" style="top:166px"><svg class="ic-note" style="left:20px;top:1px" width="16" height="16"><use href="#note"></use></svg><span class="n" style="letter-spacing: -0.31px;">stm32_sine.ld</span><span class="d" style="letter-spacing: -0.59px;">28.10.2025 16:05</span><span class="ty" style="letter-spacing: -0.17px;">LD-Datei</span></div>
    </div>
  </div>
  <div id="e-stat"><div class="t" style="left: 15px; top: 3px; color: rgb(28, 36, 64); letter-spacing: -0.4px;">23 Elemente</div><div class="abs" style="left:89px;top:3px;width:1px;height:16px;background:#ececec"></div></div>
</div>

<!-- ================= TASKBAR ================= -->
<div id="tb">
  <svg style="left:0;top:0" width="1680" height="40"><filter id="tbn" x="0" y="0" width="100%" height="100%" color-interpolation-filters="sRGB"><feTurbulence type="fractalNoise" baseFrequency="0.035 0.09" numOctaves="3" seed="7"></feTurbulence><feColorMatrix type="matrix" values="0.14 0 0 0 -0.012  0.14 0 0 0 -0.012  0.14 0 0 0 -0.012  0 0 0 0 1"></feColorMatrix></filter><rect width="1680" height="40" filter="url(#tbn)"></rect><rect width="1680" height="1" fill="#000"></rect></svg>
  <div class="abs" style="left:436px;top:0;width:45px;height:40px;background:#363636"></div>
  <div class="abs" style="left:481px;top:0;width:3px;height:40px;background:#2b2b2b"></div>
  <!-- start -->
  <svg style="left:16px;top:12px" width="17" height="17" viewBox="0 0 17 17"><path d="M0 2.400l7-1v6.600H0zM8 1.250L17 0v8H8zM0 9h7v6.600l-7-1zM8 9h9v8l-9-1.250z" fill="#fff"></path></svg>
  <div id="tb-search">
    <svg style="left:11px;top:10px" width="18" height="18" viewBox="0 0 18 18"><circle cx="11.300" cy="6.600" r="5.300" fill="none" stroke="#2b2b2b" stroke-width="1.300"></circle><path d="M7.500 10.500L.800 17.200" stroke="#2b2b2b" stroke-width="1.400"></path></svg>
    <div class="t" style="left: 40px; top: 11px; font-size: 15px; line-height: 18px; color: rgb(43, 43, 43); letter-spacing: -0.76px;">Suchen</div>
  </div>
  <!-- task view -->
  <svg style="left:351px;top:12px" width="18" height="17" viewBox="0 0 18 17"><rect x="1.600" y="5.600" width="10.500" height="6.800" fill="none" stroke="#fff" stroke-width="1.200"></rect><path d="M1.600 1v2.300h10.500V1M1.600 16v-2.300h10.500V16" fill="none" stroke="#fff" stroke-width="1.200"></path><path d="M15.700 .800v15.400" stroke="#fff" stroke-width="1.200"></path><rect x="14.200" y="5.200" width="3" height="3" fill="#fff"></rect></svg>
  <!-- edge -->
  <svg style="left:399px;top:8px" width="24" height="24" viewBox="0 0 24 24">
    <defs><linearGradient id="eg1" x1="0" y1="0" x2="1" y2="1"><stop offset="0" stop-color="#35c1f1"></stop><stop offset=".5" stop-color="#34c89b"></stop><stop offset="1" stop-color="#5dd35a"></stop></linearGradient><linearGradient id="eg2" x1="0" y1="0" x2="0" y2="1"><stop offset="0" stop-color="#1b9de2"></stop><stop offset="1" stop-color="#0f5fb0"></stop></linearGradient></defs>
    <circle cx="12" cy="12" r="12" fill="url(#eg2)"></circle>
    <path d="M0.500 10C1.500 4 6 0 12 0c6.500 0 12 4.500 12 10.500 0 3.500-2.500 5.500-5.500 5.500-2.500 0-4-1-4-2 0-.8 1-1 1-2.800C15.500 9 13.500 7 10.500 7 6 7 2 9.500 .5 14z" fill="url(#eg1)"></path>
    <path d="M9 13c0 5 4 8.500 8.500 8.500 2 0 3.500-.5 4.500-1.500-2 3-5.500 4-8.500 4C7 24 3 20 3 15c0-3.500 3-7 7.500-7C9.500 9 9 11 9 13z" fill="#0c59a4"></path><path d="M10 12c0-2.500 2-3.500 3.500-3s2 2.500 1 3.800c-.5 .8 0 2 1.500 2.700 1.500 .7 4 .5 5.500-.5-2 2.500-6 3-8.500 1.500-2-1.200-3-3-3-4.500z" fill="#0a0a0a"></path>
  </svg>
  <!-- explorer -->
  <svg style="left:449px;top:10px" width="22" height="19" viewBox="0 0 22 19"><path d="M0 1.500C0 .7.700 0 1.500 0H8l2 2.500h10.500c.8 0 1.500.7 1.500 1.500V5H0z" fill="#e8a317"></path><rect x="0" y="3.500" width="22" height="15.500" rx="1" fill="#ffd65e"></rect><path d="M4 19v-7.500c0-.8.700-1.500 1.500-1.500h11c.8 0 1.500.7 1.500 1.500V19h-4.500v-4.500h-5V19z" fill="#2f7fd6"></path><rect x="0" y="17.500" width="22" height="1.500" fill="#e3b341"></rect><path d="M4 19v-1.500h4.500V19zM13.500 19v-1.500H18V19z" fill="#1f63b5"></path></svg>
  <!-- window app -->
  <svg style="left:498px;top:12px" width="22" height="16" viewBox="0 0 22 16"><rect x="0" y="0" width="22" height="16" fill="#f2f2f2"></rect><rect x="0" y="0" width="22" height="1.500" fill="#d0d0d0"></rect><rect x="7" y="3" width="8" height="11" fill="#1479d8"></rect><path d="M2 4.500h3M2 7.500h3M2 10.500h3M17 4.500h3.500M17 7.500h3.500M17 10.500h3.500" stroke="#b5b5b5" stroke-width="1.200"></path></svg>
  <!-- ram monitor -->
  <svg style="left:546px;top:8px" width="25" height="23" viewBox="0 0 25 23"><rect x="0" y="0" width="21" height="15" rx="1" fill="#9fb4c8"></rect><rect x="1.500" y="1.500" width="18" height="11.500" fill="#2f62a8"></rect><path d="M6 4h11M6 7.500h11M6 11h6" stroke="#a9c6ea" stroke-width="1.500" stroke-dasharray="3 1"></path><rect x="3" y="3" width="2" height="8" fill="#dfe9f5"></rect><rect x="7" y="15" width="7" height="2" fill="#8ea0b2"></rect><rect x="8" y="13" width="16.500" height="7.500" fill="#3e8f3a"></rect><path d="M10 15h2.500v3H10zM14 15h2.500v3H14zM18 15h2.500v3H18z" fill="#222"></path><path d="M8 21h16.500" stroke="#d8b84a" stroke-width="1.500" stroke-dasharray="1 1"></path><rect x="6" y="19" width="2" height="2" fill="#2f7fd6"></rect></svg>
  <!-- phone monitor -->
  <svg style="left:595px;top:8px" width="24" height="24" viewBox="0 0 24 24"><path d="M11 2l11-2 1.500 12-11 2.500z" fill="#6fa0e6"></path><path d="M12.300 3.200l8.500-1.500 1.200 9.500-8.600 2z" fill="#a8c9f6"></path><path d="M15 14l4-1 .8 4-4 1z" fill="#c7c7d8"></path><path d="M13 19l8-2 .5 1.500-8 2.200z" fill="#b5b5c8"></path><path d="M1 12c2-3 7-5 11-3l1.500 3-3 1-1-1.500-4 1.500v2l-3.500 1z" fill="#f4c012"></path><path d="M2 16l9-3 4 5-9 4.500z" fill="#f7cf3d"></path><path d="M5 17l6-2 2 2.500-6 2.500z" fill="#fbe9a0"></path><path d="M2 16l4 6.500v1.500l-4.500-6.500z" fill="#b98d10"></path><path d="M6 22.500l9-4.500v1.500l-9 4.500z" fill="#d9a514"></path></svg>
  <!-- calculator -->
  <svg style="left:647px;top:8px" width="18" height="24" viewBox="0 0 18 24"><rect x="0" y="0" width="18" height="24" rx="1.500" fill="#77818c"></rect><rect x="2" y="2" width="14" height="4.500" fill="#45c2f0"></rect><path d="M2 8.500h4v3.500H2zM7 8.500h4v3.500H7zM2 13.500h4v3.500H2zM7 13.500h4v3.500H7zM2 18.500h4v3.500H2zM7 18.500h4v3.500H7zM12 8.500h4v3.500h-4z" fill="#d5d9dd"></path><rect x="12" y="13.500" width="4" height="8.500" fill="#1d63a8"></rect></svg>
  <!-- autocad -->
  <svg style="left:693px;top:7px" width="24" height="25" viewBox="0 0 24 25"><rect x="0" y="7" width="24" height="17.500" fill="#f4f4f4"></rect><path d="M8.500 0h4.500l6 19h-4.500l-1.200-4H8l-2.500 6H1z" fill="#d0161b"></path><path d="M8.500 0L11 2 5 20l-4 1z" fill="#8e0d11"></path><path d="M9.500 10.500h3l.8 2.500H8.500z" fill="#f4f4f4"></path><path d="M12.500 0l6.500 19h-2.500L11 2z" fill="#e8353a"></path><text x="16.500" y="23.500" font-family="Liberation Sans" font-weight="bold" font-size="7" fill="#111">M</text></svg>
  <!-- outlook -->
  <svg style="left:743px;top:8px" width="23" height="24" viewBox="0 0 23 24"><rect x="10" y="5" width="13" height="13" fill="#0f6fc6"></rect><path d="M11.500 7h10l-5 4.500z" fill="#fff"></path><path d="M11.500 8.500v8h10v-8l-5 4.500z" fill="#fff"></path><path d="M0 2.500L13 0v24L0 21.500z" fill="#0a5bb0"></path><ellipse cx="6.500" cy="12" rx="3.300" ry="4.200" fill="none" stroke="#fff" stroke-width="1.800"></ellipse></svg>
  <!-- control panel -->
  <svg style="left:792px;top:12px" width="22" height="16" viewBox="0 0 22 16"><rect x="0" y="0" width="22" height="16" rx="1" fill="#29a3e8"></rect><rect x="1" y="1" width="20" height="11.500" fill="#5cc0f5"></rect><circle cx="7" cy="6.500" r="3.800" fill="#e8f4fc"></circle><path d="M7 6.500V2.700A3.800 3.800 0 0 1 10.800 6.500z" fill="#1b78c8"></path><path d="M13 3.500h6M13 6.500h6M13 9.500h6" stroke="#e8f4fc" stroke-width="1.400"></path><rect x="12" y="2.800" width="1.500" height="1.500" fill="#1b78c8"></rect><rect x="12" y="5.800" width="1.500" height="1.500" fill="#1b78c8"></rect><path d="M2 14.300h7" stroke="#f2c440" stroke-width="1.200"></path><path d="M10 14.300h10" stroke="#bfe3f9" stroke-width="1.200"></path></svg>
  <!-- python file -->
  <svg style="left:841px;top:8px" width="24" height="25" viewBox="0 0 24 25"><path d="M1 0h10l5 5v17H1z" fill="#f1f1f1"></path><path d="M11 0l5 5h-5z" fill="#c9c9c9"></path><path d="M1 0h3v22H1z" fill="#d9d9d9"></path><path d="M1.500 2h2M1.500 5h2M1.500 8h2M1.500 11h2M1.500 14h2M1.500 17h2M1.500 20h2" stroke="#8a8a8a" stroke-width="1"></path><path d="M6 6h8M6 8.500h8M6 11h4" stroke="#c5c5c5" stroke-width="1"></path><path d="M14.500 9c-3 0-3.500 1-3.500 2.500V13h4v.800H9.500C8 13.800 7 15 7 17s1 3.200 2.500 3.200H11V18c0-1.500 1-2.500 2.500-2.500H17c1.200 0 2-.8 2-2v-2C19 10 17.500 9 14.500 9z" fill="#3b79b8"></path><circle cx="12.800" cy="10.800" r=".8" fill="#fff"></circle><path d="M16 25c3 0 3.500-1 3.500-2.500V21h-4v-.8H21c1.500 0 2.500-1.200 2.500-3.200S22.500 13.800 21 13.800h-1.500V16c0 1.500-1 2.500-2.500 2.500h-3.500c-1.200 0-2 .8-2 2v2c0 1.500 1.500 2.500 4.500 2.500z" fill="#f6c932"></path><circle cx="17.800" cy="23.200" r=".8" fill="#fff"></circle></svg>
  <!-- paint -->
  <svg style="left:889px;top:7px" width="24" height="26" viewBox="0 0 24 26"><path d="M0 15c0-5 5-9 11-9 5 0 8.500 2.500 8.500 6 0 2.500-2.500 3-2.500 5 0 1.500 1.500 2.500 .8 4.500-1 2.500-5 3.500-9 2.500C3 23 0 19.500 0 15z" fill="#dcebf8" stroke="#6d9dd0" stroke-width="1"></path><circle cx="5" cy="15.500" r="1.900" fill="#e0453a"></circle><circle cx="8" cy="10.800" r="1.900" fill="#3aa547"></circle><circle cx="13.300" cy="9.800" r="1.800" fill="#f2b632"></circle><circle cx="9" cy="19.500" r="1.800" fill="#4b7fd0"></circle><path d="M21 0l2.500 1.500-1.500 5.500h-2.500z" fill="#d9a066"></path><path d="M19.300 7h2.700L18 22.500l-2.500 3.500.3-4z" fill="#f28a1e"></path></svg>
  <!-- terminal -->
  <svg style="left:938px;top:11px" width="24" height="18" viewBox="0 0 24 18"><rect x="0" y="0" width="24" height="18" rx="1" fill="#3c3c3c"></rect><rect x="0" y="0" width="24" height="3" fill="#8a8a8a"></rect><rect x="0" y="0" width="8" height="3" fill="#b5b5b5"></rect><path d="M3 6.500l5 3.500-5 3.500" fill="none" stroke="#fff" stroke-width="1.800"></path><path d="M10.500 14h7" stroke="#fff" stroke-width="1.800"></path></svg>
  <!-- running indicators -->
  <div class="run" style="left:391px;width:40px"></div>
  <div class="run" style="left:436px;width:45px"></div><div class="run" style="left:481px;width:3px;background:#b24a5e"></div>
  <div class="run" style="left:685px;width:40px"></div>
  <div class="run" style="left:734px;width:40px"><i></i></div>
  <div class="run" style="left:783px;width:40px"><i></i></div>
  <div class="run" style="left:832px;width:40px"><i></i></div>
  <div class="run" style="left:881px;width:40px"><i></i></div>
  <div class="run" style="left:930px;width:40px"></div>
  <!-- tray -->
  <svg style="left:1322px;top:10px" width="24" height="22" viewBox="0 0 24 22"><defs><linearGradient id="mg" x1="0" y1="0" x2="1" y2="1"><stop offset="0" stop-color="#ffc83d"></stop><stop offset="1" stop-color="#f7630c"></stop></linearGradient></defs><path d="M17 3c4.500 4 4.500 11.500 0 15.500S4.500 21.500 0 15.500c4 1.800 8.500 1 11.500-2S15.500 7 14 3.500z" fill="url(#mg)"></path><circle cx="18" cy="5" r="5" fill="#d92b2b"></circle><text x="18" y="8" text-anchor="middle" font-family="Liberation Sans" font-weight="bold" font-size="8" fill="#fff">3</text></svg>
  <div class="t" style="left: 1354px; top: 12px; font-size: 13.5px; line-height: 16px; color: rgb(255, 255, 255); letter-spacing: -0.64px;">10°C</div>
  <div class="t" style="left: 1391.5px; top: 12px; font-size: 13.5px; line-height: 16px; color: rgb(255, 255, 255); letter-spacing: -0.2px;">Klar</div>
  <svg style="left:1439px;top:16px" width="13" height="8" viewBox="0 0 13 8"><path d="M.700 7L6.500 1.200 12.300 7" fill="none" stroke="#fff" stroke-width="1.300"></path></svg>
  <svg style="left:1463px;top:12px" width="12" height="17" viewBox="0 0 12 17"><path d="M2 2.500C3 .800 7 .800 8 2.500M2 14.500c1 1.700 5 1.700 6 0" fill="none" stroke="#ddd" stroke-width="1"></path><rect x=".600" y="4.500" width="7" height="8" rx="1.500" fill="none" stroke="#fff" stroke-width="1.100"></rect><path d="M8 7.500l3-1.500v5l-3-1.500" fill="none" stroke="#fff" stroke-width="1"></path></svg>
  <svg style="left:1485px;top:14px" width="16" height="13" viewBox="0 0 16 13"><rect x="3.500" y=".500" width="12" height="8" fill="none" stroke="#fff" stroke-width="1"></rect><rect x=".500" y="1.500" width="4" height="4" fill="#111" stroke="#fff" stroke-width="1"></rect><path d="M9.500 8.500v3.500M6 12.400h7" stroke="#fff" stroke-width="1"></path></svg>
  <svg style="left:1509px;top:14px" width="16" height="13" viewBox="0 0 16 13"><path d="M.500 4.500h2.500l3.500-3.500v11l-3.500-3.500H.500z" fill="none" stroke="#fff" stroke-width="1"></path><path d="M8.500 4.500c1 1 1 3 0 4" fill="none" stroke="#fff" stroke-width="1"></path><path d="M10.500 2.500c2 2 2 6 0 8" fill="none" stroke="#999" stroke-width="1"></path><path d="M12.800 .800c2.700 3 2.700 8.500 0 11.500" fill="none" stroke="#666" stroke-width="1"></path></svg>
  <svg style="left:1537px;top:12px" width="16" height="16" viewBox="0 0 16 16"><path d="M10 1.500l3 2.500L6 14l-3.500-2.500z" fill="none" stroke="#fff" stroke-width="1.200"></path><path d="M11.500 .500l2.500 2" stroke="#fff" stroke-width="1.200"></path><path d="M4 11c-3 0-4 2-3 3.500s3 0 2.500-1.500M11 7c2-.5 4 0 4 2" fill="none" stroke="#fff" stroke-width="1.100"></path></svg>
  <div class="t c" style="left: 1593.5px; top: 4px; color: rgb(255, 255, 255); line-height: 14px; letter-spacing: -1.01px;">19:31</div>
  <div class="t c" style="left: 1593.5px; top: 22px; color: rgb(255, 255, 255); line-height: 14px; letter-spacing: -0.61px;">28.10.2025</div>
  <svg style="left:1639px;top:13px" width="17" height="16" viewBox="0 0 17 16"><path d="M0 0h15v11.500H6L3 14.500v-3H0z" fill="#fff"></path><path d="M2.500 3h10M2.500 5.500h10M2.500 8h6" stroke="#111" stroke-width="1"></path><circle cx="13" cy="11.500" r="3.500" fill="#111"></circle><path d="M11 12.500c0-2 3-3 3.500-1.500s-2 2.500-2.500 1.500" fill="none" stroke="#fff" stroke-width="1"></path></svg>
  <div class="abs" style="left:1675px;top:0;width:1px;height:40px;background:#3a3a3a"></div>
</div>



</body></html>
